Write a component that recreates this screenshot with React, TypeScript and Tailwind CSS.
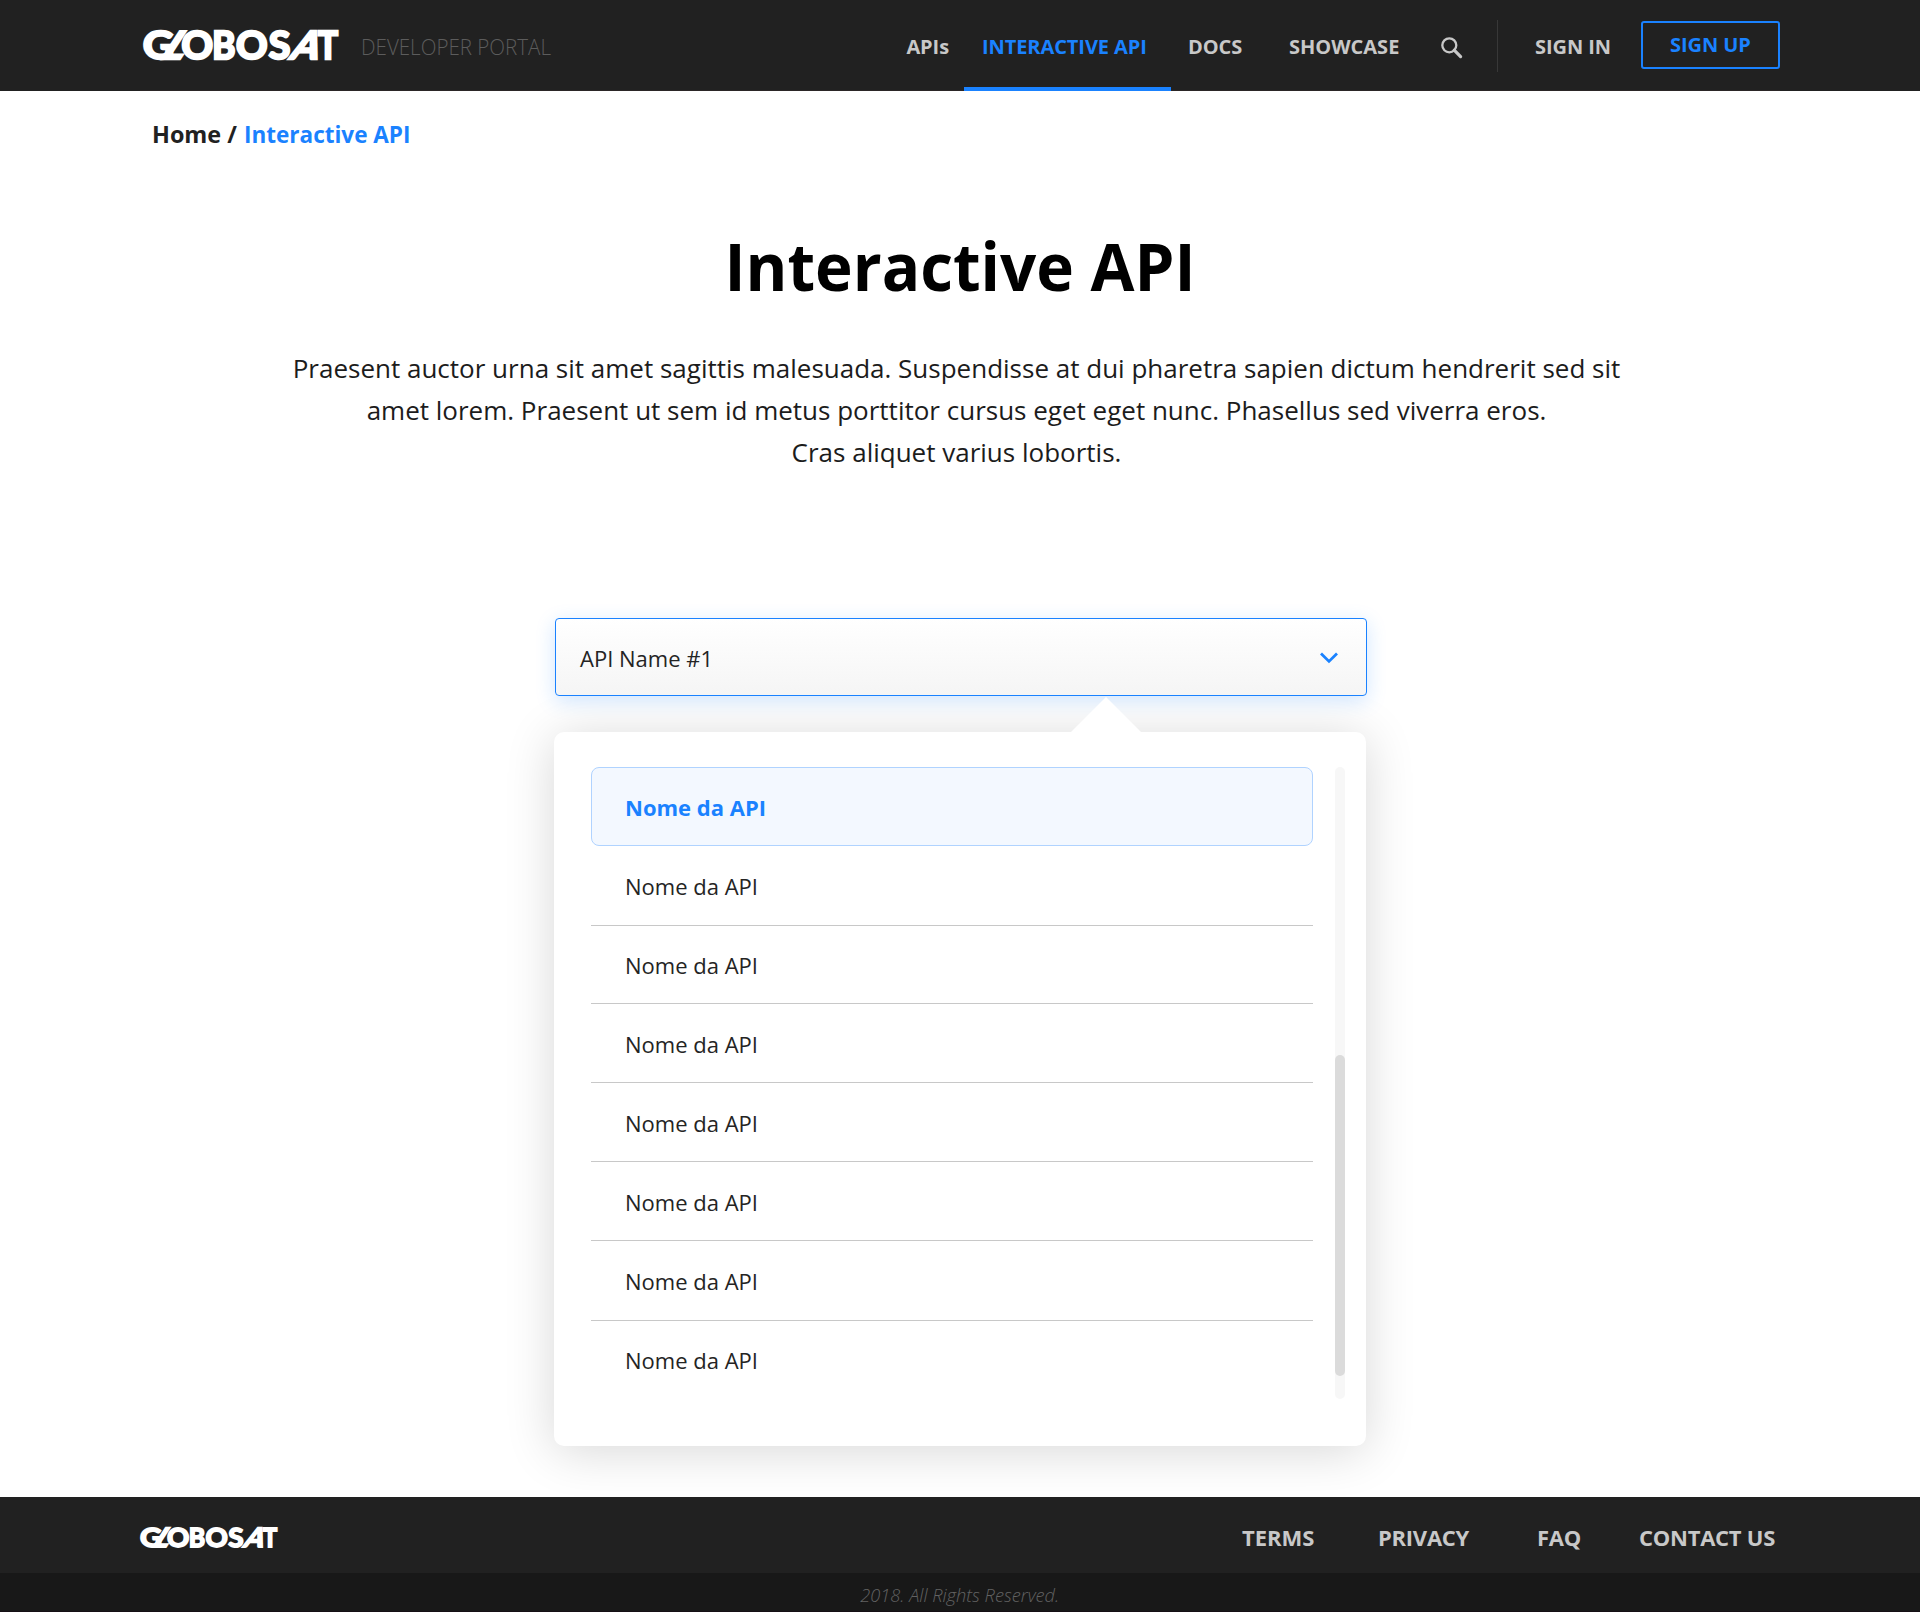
import React from "react";

type Letter = { ch: string; x: number; w: number; skew?: number };

const logoLetters: Letter[] = [
  { ch: "G", x: 0, w: 31 },
  { ch: "L", x: 15.5, w: 22, skew: -33 },
  { ch: "O", x: 38.8, w: 31.6 },
  { ch: "B", x: 69.6, w: 23.2 },
  { ch: "O", x: 93.6, w: 31.6 },
  { ch: "S", x: 126.4, w: 21.6 },
  { ch: "A", x: 146.6, w: 27.4, skew: -21 },
  { ch: "T", x: 176, w: 20 },
];

function Logo({ className }: { className: string }) {
  return (
    <svg viewBox="0 0 196 33" className={`shrink-0 overflow-visible ${className}`} role="img" aria-label="Globosat" preserveAspectRatio="none">
      {logoLetters.map((l, i) => (
        <text
          key={i}
          transform={`translate(${l.x} 30.6) skewX(${l.skew ?? 0})`}
          textLength={l.w}
          lengthAdjust="spacingAndGlyphs"
          className="fill-white stroke-white stroke-[2.6] font-['Lato'] text-[38.5px] font-bold"
        >
          {l.ch}
        </text>
      ))}
    </svg>
  );
}

function Header() {
  return (
    <header className="h-[91px] bg-[#212121]">
      <div className="mx-auto flex h-full w-[1640px] items-stretch whitespace-nowrap border-b border-[#2b2627] text-xl/[28px] font-bold tracking-[-0.08px] text-[#c8c8c8]">
        <Logo className="ml-[3px] mt-[28px] h-[33px] w-[195px]" />
        <span className="ml-[23px] mt-[31px] w-[200px] origin-left scale-x-[0.935] text-[22px]/[30px] font-light tracking-normal text-[#5c5c5c]">
          DEVELOPER PORTAL
        </span>
        <nav className="ml-auto flex">
          <a className="mr-[15px] mt-[33px]">APIs</a>
          <a className="-mb-px w-[207px] border-b-4 border-[#1a82ff] pl-[18px] pt-[33px] text-[#1a82ff]">INTERACTIVE API</a>
          <a className="ml-[17px] mt-[33px] w-[101px]">DOCS</a>
          <a className="mt-[33px] w-[112px] tracking-normal">SHOWCASE</a>
        </nav>
        <svg viewBox="0 0 22 22" className="ml-[40px] mt-[37px] h-[22px] w-[22px] fill-none stroke-[#c8c8c8]">
          <circle cx="8.3" cy="8.3" r="7" strokeWidth="2.3" />
          <path d="M13.2 13.2 19.6 19.6" strokeWidth="3.2" strokeLinecap="round" />
        </svg>
        <div className="ml-[34px] mt-[20px] h-[52px] w-px bg-[#383838]" />
        <a className="ml-[37px] mt-[33px] w-[106px]">SIGN IN</a>
        <a className="mt-[21px] h-[48px] w-[139px] rounded-[3px] border-2 border-[#1a82ff] pt-[8px] pl-[27px] text-[#1a82ff]">SIGN UP</a>
      </div>
    </header>
  );
}

function ApiRow({ className }: { className: string }) {
  return (
    <li className={`border-b border-[#c8c8c8] pl-[34px] text-[22px]/[30px] text-[#242424] last:border-transparent ${className}`}>
      Nome da API
    </li>
  );
}

function ApiPicker() {
  return (
    <div className="relative ml-[554px] mt-[145px] w-[813px]">
      <button className="relative z-10 ml-px flex h-[78px] w-[812px] items-center justify-between rounded-[4px] border border-[#1a82ff] bg-linear-to-b from-white to-[#f5f5f5] pl-[24px] pr-[27px] shadow-[0_5px_20px_rgba(26,130,255,0.2)]">
        <span className="pt-px text-[22px]/[30px] text-[#242424]">API Name #1</span>
        <svg viewBox="0 0 20 14" className="mt-px h-[14px] w-[20px] fill-none stroke-[#1a82ff] stroke-[2.8]">
          <path d="M2 2.6 10 10.4 18 2.6" />
        </svg>
      </button>
      <div className="relative mt-[36px] flex h-[714px] w-[812px] rounded-[10px] bg-white pl-[37px] pt-[35px] shadow-[0_5px_50px_rgba(0,0,0,0.16)]">
        <svg viewBox="0 0 72 36" className="absolute -top-[35px] left-[516px] z-20 h-[36px] w-[72px] fill-white">
          <path d="M36 0 72 36H0Z" />
        </svg>
        <ul className="w-[722px]">
          <li className="h-[79px] rounded-[8px] border border-[#b0d3ff] bg-[#f3f8ff] pl-[33px] pt-[24px] text-[22px]/[30px] font-bold text-[#1a82ff]">
            Nome da API
          </li>
          <ApiRow className="h-[80px] pt-[25px]" />
          <ApiRow className="h-[78px] pt-[24px]" />
          <ApiRow className="h-[79px] pt-[25px]" />
          <ApiRow className="h-[79px] pt-[25px]" />
          <ApiRow className="h-[79px] pt-[25px]" />
          <ApiRow className="h-[80px] pt-[25px]" />
          <ApiRow className="h-[79px] pt-[24px]" />
        </ul>
        <div className="ml-[22px] h-[632px] w-[10px] rounded-full bg-[#f7f7f7] pt-[288px]">
          <div className="h-[321px] rounded-full bg-[#dbdbdb]" />
        </div>
      </div>
    </div>
  );
}

function Footer() {
  return (
    <footer className="relative mt-[51px] whitespace-nowrap bg-[#212121]">
      <div className="mx-auto flex h-[76px] w-[1640px] text-[22px]/[30px] font-bold tracking-[-0.25px] text-[#c8c8c8]">
        <Logo className="mt-[29px] h-[23px] w-[137px]" />
        <nav className="ml-auto mt-[25px] flex">
          <a className="w-[136px] tracking-normal">TERMS</a>
          <a className="w-[159px]">PRIVACY</a>
          <a className="w-[102px]">FAQ</a>
          <a className="w-[141px]">CONTACT US</a>
        </nav>
      </div>
      <div className="flex h-[39px] justify-center border-b border-[#160f14] bg-[#181818] pt-[9px] text-[19px]/[26px] font-light italic text-[#626262]">
        <span className="inline-block scale-x-[0.96]">2018. All Rights Reserved.</span>
      </div>
    </footer>
  );
}

export default function App() {
  return (
    <div className="h-[1612px] w-[1920px] overflow-hidden bg-white font-['Open_Sans',sans-serif]">
      <Header />
      <main>
        <div className="flex pl-[151px] pt-[27px] text-2xl/[32px] font-bold text-[#212121]">
          <span className="w-[93px] origin-left scale-x-[0.975] pl-px">Home /</span>
          <span className="origin-left scale-x-[0.938] text-[#1a82ff]">Interactive API</span>
        </div>
        <h1 className="mt-[70px] scale-x-[0.951] text-center text-[67px]/[90px] font-bold text-black">Interactive API</h1>
        <p className="mt-[37px] pr-[7px] text-center text-[26px]/[42px] text-[#1c1c1c]">
          Praesent auctor urna sit amet sagittis malesuada. Suspendisse at dui pharetra sapien dictum hendrerit sed sit
          <br />
          amet lorem. Praesent ut sem id metus porttitor cursus eget eget nunc. Phasellus sed viverra eros.
          <br />
          Cras aliquet varius lobortis.
        </p>
        <ApiPicker />
      </main>
      <Footer />
    </div>
  );
}
